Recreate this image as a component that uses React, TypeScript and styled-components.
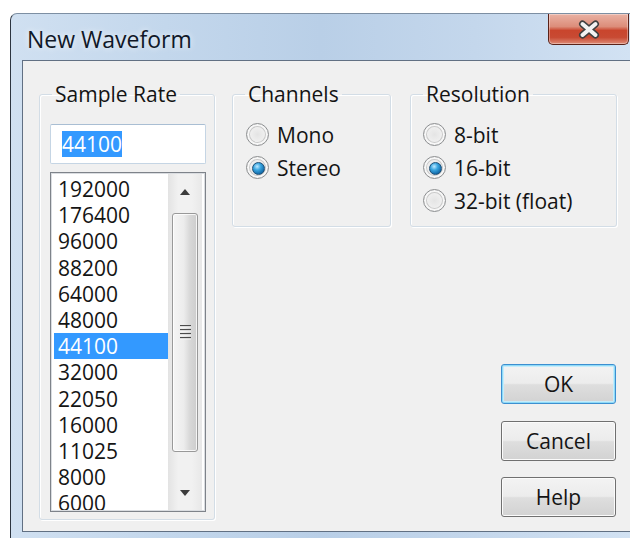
import styled, { createGlobalStyle, css } from 'styled-components'

const sampleRates = [
  '192000', '176400', '96000', '88200', '64000', '48000', '44100',
  '32000', '22050', '16000', '11025', '8000', '6000',
]

const channelOptions = ['Mono', 'Stereo']
const resolutionOptions = ['8-bit', '16-bit', '32-bit (float)']

export default function App() {
  const rate = '44100'
  const channels = 'Stereo'
  const resolution = '16-bit'

  return (
    <>
      <GlobalStyle />
      <Window>
        <TitleBar>
          <Title>New Waveform</Title>
          <CloseButton aria-label="Close">
            <svg width="26" height="19" viewBox="0 0 26 19">
              <path d="M6.5 4 L19.5 15 M19.5 4 L6.5 15" stroke="#404040" strokeWidth="7" strokeLinecap="round" />
              <path d="M6.5 4 L19.5 15 M19.5 4 L6.5 15" stroke="#f2f2f2" strokeWidth="4" strokeLinecap="round" />
            </svg>
          </CloseButton>
        </TitleBar>

        <Client>
          <GroupBox>
            <Legend>Sample Rate</Legend>
            <SampleRateBody>
              <TextBox role="textbox">
                <Selection>{rate}</Selection>
              </TextBox>
              <ListBox>
                <ListItems>
                  {sampleRates.map((r) => (
                    <ListItem key={r} $selected={r === rate}>
                      {r}
                    </ListItem>
                  ))}
                </ListItems>
                <ScrollBar>
                  <ScrollArrow>
                    <svg width="10" height="6" viewBox="0 0 10 6">
                      <polygon points="0,6 5,0 10,6" fill="#3c3c3c" />
                    </svg>
                  </ScrollArrow>
                  <ScrollTrack>
                    <ScrollThumb>
                      <svg width="11" height="15" viewBox="0 0 11 15">
                        {[0, 4, 8, 12].map((y) => (
                          <g key={y}>
                            <rect x="0" y={y} width="11" height="1.4" fill="#4d4d4d" />
                            <rect x="0" y={y + 1.4} width="11" height="1" fill="#fff" />
                          </g>
                        ))}
                      </svg>
                    </ScrollThumb>
                  </ScrollTrack>
                  <ScrollArrow>
                    <svg width="10" height="6" viewBox="0 0 10 6">
                      <polygon points="0,0 10,0 5,6" fill="#3c3c3c" />
                    </svg>
                  </ScrollArrow>
                </ScrollBar>
              </ListBox>
            </SampleRateBody>
          </GroupBox>

          <RightColumn>
            <GroupRow>
              <GroupBox $width={159}>
                <Legend>Channels</Legend>
                <OptionList $left={13}>
                  {channelOptions.map((c) => (
                    <RadioRow key={c}>
                      <RadioDot $checked={c === channels} />
                      {c}
                    </RadioRow>
                  ))}
                </OptionList>
              </GroupBox>
              <GroupBox $width={207}>
                <Legend>Resolution</Legend>
                <OptionList $left={12}>
                  {resolutionOptions.map((r) => (
                    <RadioRow key={r}>
                      <RadioDot $checked={r === resolution} />
                      {r}
                    </RadioRow>
                  ))}
                </OptionList>
              </GroupBox>
            </GroupRow>

            <ButtonStack>
              <PushButton $default>OK</PushButton>
              <PushButton>Cancel</PushButton>
              <PushButton>Help</PushButton>
            </ButtonStack>
          </RightColumn>
        </Client>
      </Window>
    </>
  )
}

const GlobalStyle = createGlobalStyle`
  html, body {
    margin: 0;
    padding: 0;
    background: #fff;
  }

  body {
    font-family: "Open Sans", "Liberation Sans", sans-serif;
    font-size: 21px;
    color: #141414;
  }
`

const Window = styled.div`
  box-sizing: border-box;
  width: 620px;
  height: 525px;
  margin: 13px 0 0 10px;
  border-left: 1px solid #2c3540;
  border-top: 1px solid #7d8fa3;
  border-top-left-radius: 7px;
  background: linear-gradient(
    to right,
    #d0e0f1 0%,
    #c3d7ec 25%,
    #b9cfe7 50%,
    #c4d7ec 75%,
    #d2e2f3 100%
  );
  overflow: hidden;
`

const TitleBar = styled.div`
  display: flex;
  justify-content: space-between;
  align-items: flex-start;
  height: 46px;
`

const Title = styled.h1`
  margin: 0;
  padding: 10px 0 0 16px;
  font-size: 23px;
  font-weight: 400;
  line-height: 30px;
  color: #101828;
  text-shadow: 0 0 6px rgba(255, 255, 255, 0.9);
`

const CloseButton = styled.button`
  display: flex;
  align-items: center;
  justify-content: center;
  width: 81px;
  height: 31px;
  margin-right: 1px;
  padding: 0;
  border: 1px solid #5a2218;
  border-top: none;
  border-radius: 0 0 5px 5px;
  background: linear-gradient(
    to bottom,
    #eab2a4 0%,
    #dc8d7a 42%,
    #c9452d 55%,
    #c84a33 78%,
    #df8c77 100%
  );
  box-shadow: inset 0 0 0 1px rgba(255, 255, 255, 0.35);
`

const Client = styled.div`
  box-sizing: border-box;
  display: grid;
  grid-template-columns: 176px 1fr;
  column-gap: 17px;
  height: 472px;
  margin-left: 11px;
  padding: 21px 13px 11px 16px;
  background: #f0f0f0;
  border: 1px solid #617083;
  border-right: none;
`

const GroupBox = styled.fieldset<{ $width?: number }>`
  box-sizing: border-box;
  min-width: 0;
  width: ${(p) => (p.$width ? `${p.$width}px` : 'auto')};
  margin: 0;
  padding: 0;
  border: 1px solid #d3dde6;
  border-radius: 3px;
  box-shadow: inset 1px 1px 0 #fff, 1px 1px 0 #fff;
`

const Legend = styled.legend`
  margin-left: 12px;
  padding: 0 3px;
  font-size: 21px;
  line-height: 24px;
  color: #141414;
`

const SampleRateBody = styled.div`
  display: flex;
  flex-direction: column;
  gap: 8px;
  padding: 18px 8px 7px 10px;
`

const TextBox = styled.div`
  box-sizing: border-box;
  display: flex;
  align-items: center;
  height: 40px;
  padding-left: 11px;
  background: #fff;
  border: 1px solid #c5d5e4;
  border-top-color: #a9bed3;
  border-radius: 2px;
`

const Selection = styled.span`
  background: #3399ff;
  color: #fff;
  line-height: 26px;
`

const ListBox = styled.div`
  box-sizing: border-box;
  display: flex;
  height: 340px;
  padding: 1px 3px 1px 2px;
  background: #fff;
  border: 1px solid #7e838a;
  box-shadow: inset 0 0 0 1px #dadde1;
`

const ListItems = styled.div`
  flex: 1;
  padding: 2px 0 0 1px;
  overflow: hidden;
`

const ListItem = styled.div<{ $selected?: boolean }>`
  height: 26.2px;
  padding-left: 4px;
  line-height: 26.2px;
  white-space: nowrap;

  ${(p) =>
    p.$selected &&
    css`
      background: #3399ff;
      color: #fff;
    `}
`

const ScrollBar = styled.div`
  display: flex;
  flex-direction: column;
  width: 34px;
  background: linear-gradient(to right, #e3e3e3 0%, #f1f1f1 30%, #f1f1f1 70%, #e8e8e8 100%);
`

const ScrollArrow = styled.div`
  display: flex;
  align-items: center;
  justify-content: center;
  height: 35px;
`

const ScrollTrack = styled.div`
  flex: 1;
  padding: 4px 4px 0;
`

const ScrollThumb = styled.div`
  box-sizing: border-box;
  display: flex;
  align-items: center;
  justify-content: center;
  height: 239px;
  border: 1px solid #999;
  border-radius: 3px;
  background: linear-gradient(
    to right,
    #f5f5f5 0%,
    #ececec 45%,
    #d8d8d8 70%,
    #cdcdcd 100%
  );
  box-shadow: inset 0 0 0 1px rgba(255, 255, 255, 0.8);
`

const RightColumn = styled.div`
  display: flex;
  flex-direction: column;
`

const GroupRow = styled.div`
  display: flex;
  gap: 19px;
  align-items: stretch;
`

const OptionList = styled.div<{ $left: number }>`
  display: flex;
  flex-direction: column;
  padding: 12px 0 9px ${(p) => p.$left}px;
`

const RadioRow = styled.label`
  display: flex;
  align-items: center;
  gap: 8px;
  height: 33px;
  white-space: nowrap;
`

const RadioDot = styled.span<{ $checked?: boolean }>`
  box-sizing: border-box;
  position: relative;
  flex: none;
  width: 23px;
  height: 23px;
  border-radius: 50%;
  border: 1px solid #8d8f91;
  background: radial-gradient(circle at 50% 50%, #e4e4e4 0%, #eeeeee 45%, #ffffff 70%);
  box-shadow: inset 0 0 0 2px #f7f7f7, inset 0 0 0 3px #c9c9c9;

  ${(p) =>
    p.$checked &&
    css`
      &::after {
        content: '';
        position: absolute;
        left: 5px;
        top: 5px;
        width: 11px;
        height: 11px;
        border-radius: 50%;
        border: 1px solid #1e4f75;
        background: radial-gradient(circle at 38% 32%, #bfe9ff 0%, #3aa6e0 35%, #1269a8 75%, #0d4c80 100%);
      }
    `}
`

const ButtonStack = styled.div`
  display: flex;
  flex-direction: column;
  align-self: flex-end;
  gap: 16.5px;
  margin: auto 1px 3px 0;
`

const PushButton = styled.button<{ $default?: boolean }>`
  box-sizing: border-box;
  width: 115px;
  height: 40px;
  padding: 0;
  border: 1px solid #707070;
  border-radius: 3px;
  background: linear-gradient(
    to bottom,
    #f3f3f3 0%,
    #ececec 48%,
    #dedede 52%,
    #d2d2d2 100%
  );
  box-shadow: inset 0 0 0 1px #fbfbfb;
  font-family: inherit;
  font-size: 21px;
  color: #141414;

  ${(p) =>
    p.$default &&
    css`
      border-color: #3c8fd0;
      box-shadow: inset 0 0 0 1px #8fdaf7, inset 0 0 0 2px #c6ecfb;
    `}
`
